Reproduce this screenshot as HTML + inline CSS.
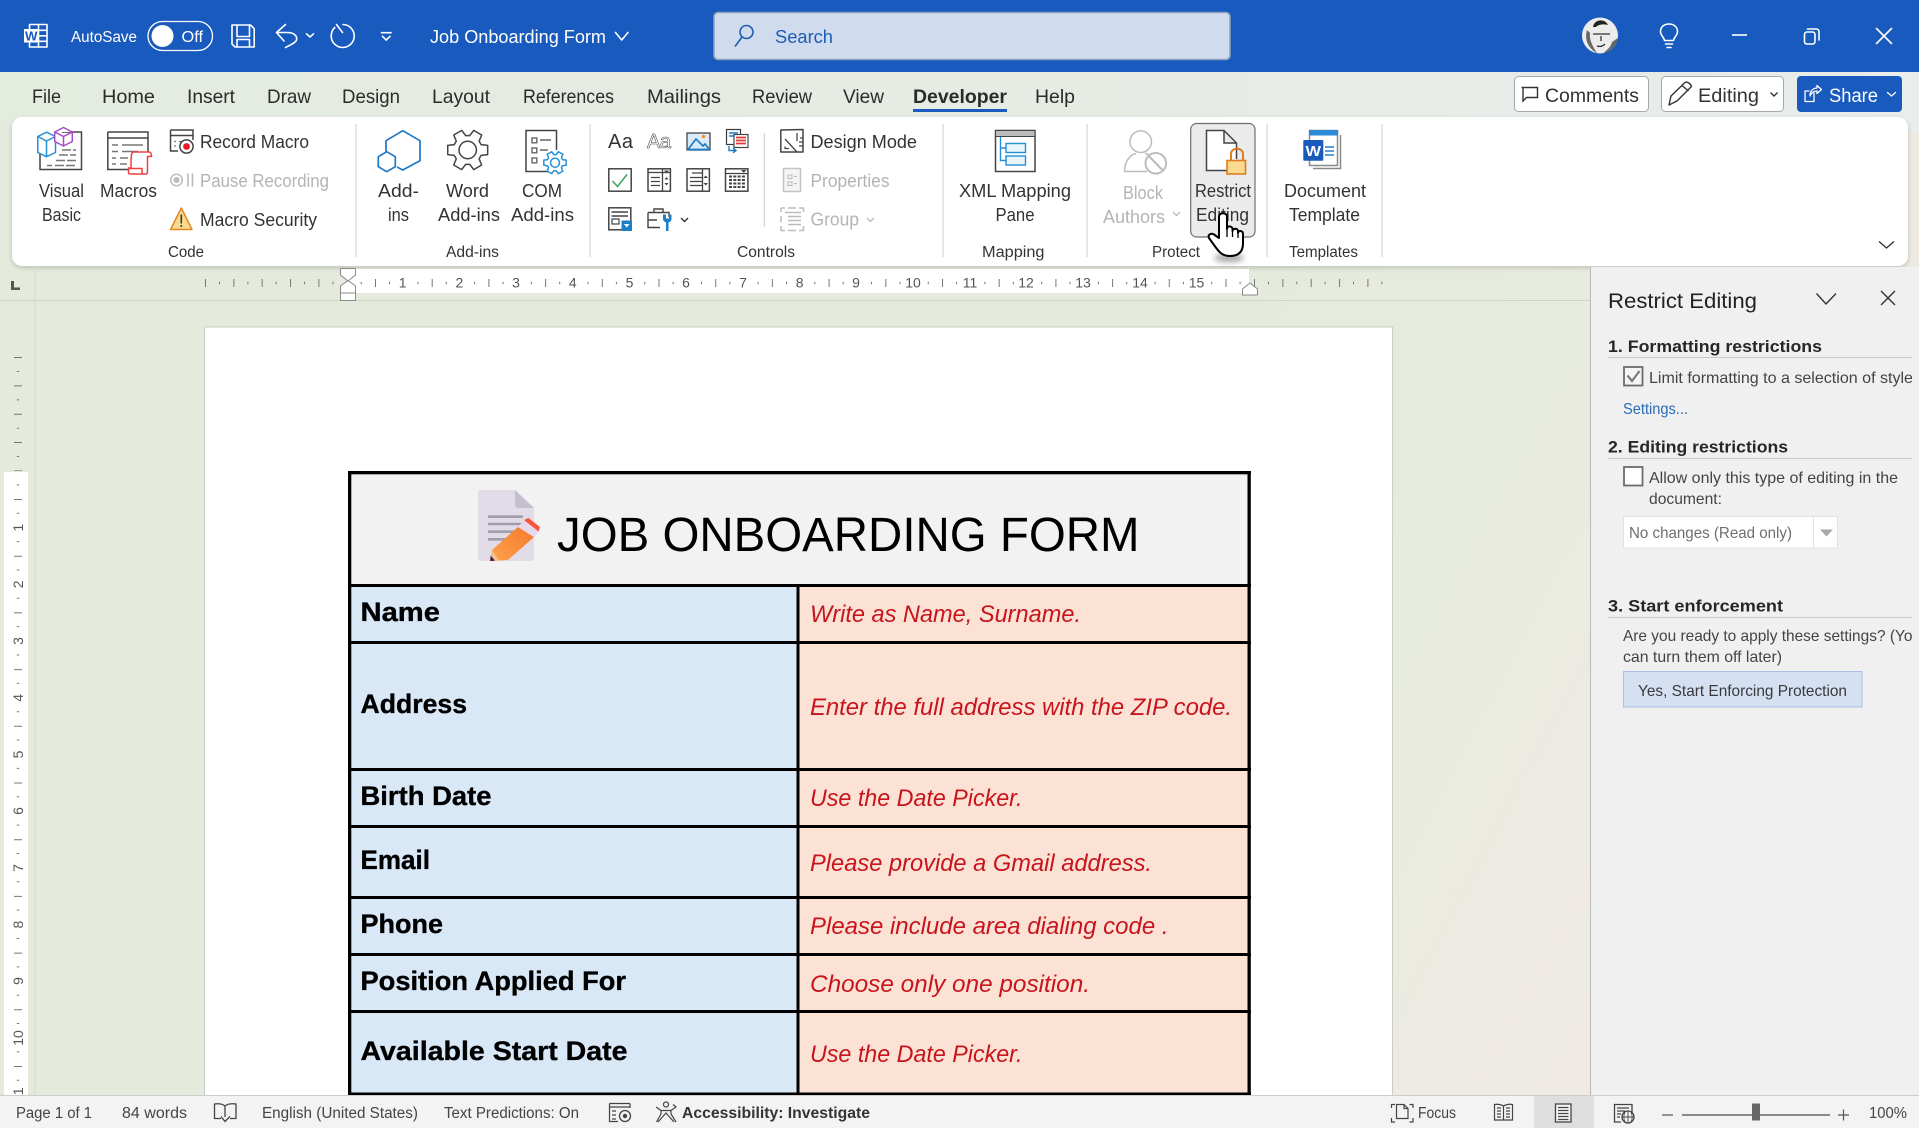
<!DOCTYPE html>
<html lang="en"><head><meta charset="utf-8"><title>Job Onboarding Form - Word</title>
<style>
html,body{margin:0;padding:0;width:1919px;height:1128px;overflow:hidden;background:#e4ebdd}
svg{display:block}
text{font-family:"Liberation Sans",sans-serif;fill:#333;white-space:pre}
.w{fill:#fff}
.tab{font-size:19.5px;fill:#2b2b2b}
.lg{font-size:18.5px;fill:#333}
.gr{font-size:15.5px;fill:#333}
.dis{fill:#b4b4b4}
.pt{font-size:17px;font-weight:bold;fill:#262626}
.pb{font-size:16px;fill:#444}
.st{font-size:15.5px;fill:#444}
.rn{font-size:14px;fill:#555;text-anchor:middle}
.lab{font-size:26.5px;font-weight:bold;fill:#000;stroke:#000;stroke-width:.35px}
.val{font-size:24px;font-style:italic;fill:#c8141c}
.ln{fill:none;stroke:#444;stroke-width:1.5}
.g{fill:none;stroke:#8a8a8a;stroke-width:1.5}
.d{fill:none;stroke:#bcbcbc;stroke-width:1.5}
.wl{fill:none;stroke:#fff;stroke-width:1.6;stroke-linecap:round;stroke-linejoin:round}
</style></head><body>
<svg xmlns="http://www.w3.org/2000/svg" width="1919" height="1128" viewBox="0 0 1919 1128">
<defs>
<linearGradient id="bg" gradientUnits="userSpaceOnUse" x1="0" y1="260" x2="1600" y2="1100"><stop offset="0" stop-color="#e4ebdd"/><stop offset=".6" stop-color="#e4ebdc"/><stop offset=".82" stop-color="#e9ebe0"/><stop offset="1" stop-color="#f0eae5"/></linearGradient>
<linearGradient id="tb" x1="0" y1="0" x2="1" y2="0"><stop offset="0" stop-color="#e4ebdf"/><stop offset=".55" stop-color="#e6ebe4"/><stop offset="1" stop-color="#e9edeb"/></linearGradient>
<linearGradient id="pen" x1="0" y1="1" x2="1" y2="0"><stop offset="0" stop-color="#ffa14f"/><stop offset="1" stop-color="#f57a2a"/></linearGradient>
<clipPath id="pc"><rect x="1600" y="280" width="312" height="440"/></clipPath>
<clipPath id="vc"><rect x="0" y="300" width="34" height="795"/></clipPath>
<polygon id="gear" points="19.97,-4.61 19.97,4.61 13.44,5.43 11.43,8.93 13.98,14.99 5.99,19.6 2.02,14.36 -2.02,14.36 -5.99,19.6 -13.98,14.99 -11.43,8.93 -13.44,5.43 -19.97,4.61 -19.97,-4.61 -13.44,-5.43 -11.43,-8.93 -13.98,-14.99 -5.99,-19.6 -2.02,-14.36 2.02,-14.36 5.99,-19.6 13.98,-14.99 11.43,-8.93 13.44,-5.43"/>
<filter id="bl" x="-50%" y="-100%" width="200%" height="300%"><feGaussianBlur stdDeviation="3"/></filter>
<filter id="sh" x="-2%" y="-10%" width="104%" height="125%"><feGaussianBlur stdDeviation="2.5"/></filter>
</defs>

<!-- backgrounds -->
<rect width="1919" height="1128" fill="url(#bg)"/>
<rect y="72" width="1919" height="60" fill="url(#tb)"/>
<rect width="1919" height="72" fill="#185abd"/>

<!-- title bar -->
<g class="wl"><rect x="29.5" y="24.5" width="17.5" height="22.5" fill="none"/><path d="M38.5 24.5V47M38 30.3H47M38 35.8H47M38 41.3H47"/></g>
<rect x="24" y="29" width="14.5" height="13.5" fill="#fff"/>
<text x="25" y="40.5" font-size="12.5" font-weight="bold" style="fill:#185abd" textLength="12.5" lengthAdjust="spacingAndGlyphs">W</text>
<text class="w" x="71" y="42" font-size="15.5" textLength="66" lengthAdjust="spacingAndGlyphs">AutoSave</text>
<rect x="148" y="21.5" width="64.5" height="29" rx="14.5" fill="none" stroke="#fff" stroke-width="1.3"/>
<circle cx="162.5" cy="36" r="11" fill="#fff"/>
<text class="w" x="181.5" y="42" font-size="15.5" textLength="21.5" lengthAdjust="spacingAndGlyphs">Off</text>
<path class="wl" d="M232 25H250.5L254.2 28.7V47H235L232 44ZM237 25V36.5H249.5V25M237 47V39.5H249.5V47"/>
<path class="wl" d="M285.5 24.5L276.5 32.5L284 41M276.5 32.5H287.5C294 32.5 297.5 36 296.5 40C295.5 43 290 45 285.5 47.5"/>
<path class="wl" d="M306.5 33.8L310 37L313.5 33.8"/>
<path class="wl" d="M336.5 24.5L342.5 32.5M343 24.5C349.5 24.5 354.2 30 354.2 36C354.2 42.3 349 47.5 342.7 47.5C336.4 47.5 331.2 42.3 331.2 36C331.2 32.5 332.6 29.5 334.8 27.5"/>
<path class="wl" d="M381.5 32.7H391M382.5 36.3L386.2 40L390 36.3"/>
<text class="w" x="430" y="43" font-size="18" textLength="176" lengthAdjust="spacingAndGlyphs">Job Onboarding Form</text>
<path class="wl" d="M615.5 32.5L621.7 40L628 32.5"/>
<rect x="714" y="12.5" width="516" height="47" rx="4" fill="#d0dcee" stroke="#8fa2bd" stroke-width="1.5"/>
<circle cx="746.5" cy="32" r="6.5" fill="none" stroke="#1f5cb0" stroke-width="1.6"/><path d="M742 37L735 46.5" stroke="#1f5cb0" stroke-width="1.6" fill="none"/>
<text x="775" y="43" font-size="18.5" style="fill:#1d5cb3" textLength="58" lengthAdjust="spacingAndGlyphs">Search</text>
<g transform="translate(-1 0)">
<circle cx="1601" cy="35.5" r="18" fill="#ececec"/>
<path d="M1594 27C1595 19 1606 18 1609 25C1605 24 1600 24 1597 27Z" fill="#222"/>
<path d="M1588 30C1585 40 1590 49 1598 53C1594 47 1590 40 1591 33ZM1604 53.5C1612 52 1618 45 1619 38L1613 42C1612 47 1608 50 1604 53.5Z" fill="#666"/>
<path d="M1594 34H1600M1604 34H1611M1600 34H1604M1598 46C1601 47 1604 46 1606 44M1602 36V41" stroke="#333" stroke-width="1.3" fill="none"/>
<path class="wl" d="M1666.5 40.5C1666 37 1662.5 35.5 1662.5 31.5C1662.5 27 1666 24 1671 24C1676 24 1679.5 27 1679.5 31.5C1679.5 35.5 1676 37 1675.5 40.5ZM1667.5 44H1674.5M1669 47.5H1673" transform="translate(-1 0)"/>
<path d="M1733 35H1748" stroke="#fff" stroke-width="1.6"/>
<rect x="1805.5" y="32" width="10.5" height="12" rx="2.5" class="wl"/>
<path class="wl" d="M1808.5 29H1817C1819 29 1820 30 1820 32V40"/>
<path class="wl" d="M1877.5 28.5L1892.5 43.5M1892.5 28.5L1877.5 43.5"/>
</g>

<!-- tabs -->
<text class="tab" x="32" y="103" textLength="29" lengthAdjust="spacingAndGlyphs">File</text>
<text class="tab" x="102" y="103" textLength="53" lengthAdjust="spacingAndGlyphs">Home</text>
<text class="tab" x="187" y="103" textLength="48" lengthAdjust="spacingAndGlyphs">Insert</text>
<text class="tab" x="267" y="103" textLength="44" lengthAdjust="spacingAndGlyphs">Draw</text>
<text class="tab" x="342" y="103" textLength="58" lengthAdjust="spacingAndGlyphs">Design</text>
<text class="tab" x="432" y="103" textLength="58" lengthAdjust="spacingAndGlyphs">Layout</text>
<text class="tab" x="523" y="103" textLength="91" lengthAdjust="spacingAndGlyphs">References</text>
<text class="tab" x="647" y="103" textLength="74" lengthAdjust="spacingAndGlyphs">Mailings</text>
<text class="tab" x="752" y="103" textLength="60" lengthAdjust="spacingAndGlyphs">Review</text>
<text class="tab" x="843" y="103" textLength="41" lengthAdjust="spacingAndGlyphs">View</text>
<text class="tab" x="913" y="103" font-weight="bold" textLength="94" lengthAdjust="spacingAndGlyphs">Developer</text>
<rect x="913" y="109" width="94" height="3" fill="#185abd"/>
<text class="tab" x="1035" y="103" textLength="40" lengthAdjust="spacingAndGlyphs">Help</text>

<g transform="translate(-1 0)">
<rect x="1515.5" y="76.5" width="134" height="35" rx="4" fill="#fff" stroke="#a8a8a8"/>
<path d="M1522.5 87.5H1538.5V97.5H1527.5L1524 101V87.5" fill="none" stroke="#333" stroke-width="1.4"/>
<text x="1546" y="102" font-size="19" textLength="94" lengthAdjust="spacingAndGlyphs">Comments</text>
<rect x="1662.5" y="76.5" width="122" height="35" rx="4" fill="#fff" stroke="#a8a8a8"/>
<path d="M1670 105L1672 96L1686 82.5C1688 81 1692 84 1692.5 86.5L1678 101ZM1683 85.5L1689.5 91" fill="none" stroke="#333" stroke-width="1.4" stroke-linejoin="round"/>
<text x="1699" y="102" font-size="19" textLength="61" lengthAdjust="spacingAndGlyphs">Editing</text>
<path d="M1771.5 92.5L1775 96L1778.5 92.5" fill="none" stroke="#333" stroke-width="1.4"/>
<rect x="1798" y="76" width="105" height="36" rx="4" fill="#185abd"/>
<path class="wl" d="M1815 93V101.5H1806V91H1810M1811 96C1811 90 1815 88 1818 88V85.5L1822.5 89.5L1818 93.5V91C1815 91 1812.5 92.5 1811 96Z" style="stroke-width:1.3"/>
<text class="w" x="1830" y="102" font-size="19" textLength="49" lengthAdjust="spacingAndGlyphs">Share</text>
<path class="wl" d="M1888.5 92.5L1892.5 96L1896.5 92.5" style="stroke-width:1.3"/>
</g>

<!-- ribbon -->
<rect x="12" y="119" width="1896" height="149" rx="10" fill="#8b9484" opacity=".45" filter="url(#sh)"/>
<rect x="12" y="117" width="1896" height="149" rx="10" fill="#fff"/>
<g stroke="#d6d6d6" stroke-width="1.2"><path d="M356 124V257M590 124V257M943 124V257M1087 124V257M1267 124V257M1382 124V257"/></g>

<!-- visual basic icon -->
<path class="ln" d="M62 132H81.5V169.5H40V148"/>
<path d="M47 165.5H52M55 165.5H76M56 160.5H76M59 155H76M62 150H76" stroke="#777" stroke-width="1.4" stroke-dasharray="9 2" fill="none"/>
<path d="M46.5 132.2L55.5 136.5V152.5L46.5 156.7L37.8 152.5V136.5ZM37.8 136.5L46.5 141L55.5 136.5M46.5 141V156.7" fill="#fff" stroke="#2390d8" stroke-width="1.5" stroke-linejoin="round"/>
<path d="M63.5 127.5L72.3 132V141.5L63.5 146L54.7 141.5V132ZM54.7 132L63.5 136.5L72.3 132M63.5 136.5V146" fill="#fff" stroke="#a64cc5" stroke-width="1.5" stroke-linejoin="round"/>
<text class="lg" x="39" y="197" textLength="45" lengthAdjust="spacingAndGlyphs">Visual</text>
<text class="lg" x="42" y="221" textLength="39" lengthAdjust="spacingAndGlyphs">Basic</text>
<!-- macros icon -->
<path class="ln" d="M107.8 132H148V152M107.8 132V169.5H129M107.8 138H148"/>
<path d="M112 145H118M122 145H143M112 151.5H118M122 151.5H138M112 158H116M120 158H128M112 164H116M120 164H127" stroke="#777" stroke-width="1.4" fill="none"/>
<path d="M133 152H149C151 152 151.5 153.5 151.5 156.5H147.5V171M133 152C131.5 153 131 154 131 168H128.5V172.5C128.5 174 130 174 132 174H146.5C147 174 147.5 173 147.5 171M128.5 168.5H142V174" fill="#fff" stroke="#ef4040" stroke-width="1.5"/>
<text class="lg" x="100" y="197" textLength="57" lengthAdjust="spacingAndGlyphs">Macros</text>
<!-- record -->
<path class="ln" d="M170.5 130H193V140M170.5 130V151H178M170.5 135.5H193"/>
<path d="M174 141.5H176M174 146H176M179 141.5H182" stroke="#777" stroke-width="1.3"/>
<circle cx="186.5" cy="146.5" r="6.6" fill="#fff" stroke="#444" stroke-width="1.5"/><circle cx="186.5" cy="146.5" r="3.4" fill="#e81b23"/>
<text class="lg" x="200" y="148" textLength="109" lengthAdjust="spacingAndGlyphs">Record Macro</text>
<circle cx="176.5" cy="180" r="5.8" fill="none" stroke="#bcbcbc" stroke-width="1.5"/><circle cx="176.5" cy="180" r="3" fill="#bcbcbc"/>
<path d="M188 173.5V186.5M192.5 173.5V186.5" stroke="#bcbcbc" stroke-width="1.7"/>
<text class="lg dis" x="200" y="187" textLength="129" lengthAdjust="spacingAndGlyphs">Pause Recording</text>
<path d="M181.3 208L192 229.5H170.5Z" fill="#fbd98e" stroke="#e28723" stroke-width="1.5" stroke-linejoin="round"/><path d="M181.3 214.5V223.5M181.3 225V227" stroke="#333" stroke-width="1.5"/>
<text class="lg" x="200" y="226" textLength="117" lengthAdjust="spacingAndGlyphs">Macro Security</text>
<text class="gr" x="168" y="257" textLength="36" lengthAdjust="spacingAndGlyphs">Code</text>

<!-- add-ins -->
<path d="M386 152V140.7L402.7 130.7L420 140.7V160.7L402.7 170L397 167" fill="none" stroke="#1d78c8" stroke-width="1.7" stroke-linejoin="round"/>
<path d="M386.7 151.7L395.3 156.7V166.7L386.7 171.7L378.3 166.7V156.7Z" fill="none" stroke="#1d78c8" stroke-width="1.7" stroke-linejoin="round"/>
<text class="lg" x="378" y="197" textLength="41" lengthAdjust="spacingAndGlyphs">Add-</text>
<text class="lg" x="388" y="221" textLength="21" lengthAdjust="spacingAndGlyphs">ins</text>
<use href="#gear" transform="translate(467.7 150)" fill="#fff" stroke="#444" stroke-width="1.5" stroke-linejoin="round"/>
<circle cx="467.7" cy="150" r="8.7" fill="none" stroke="#444" stroke-width="1.5"/>
<text class="lg" x="446" y="197" textLength="43" lengthAdjust="spacingAndGlyphs">Word</text>
<text class="lg" x="438" y="221" textLength="62" lengthAdjust="spacingAndGlyphs">Add-ins</text>
<path class="ln" d="M548 171.5H526V130.5H556.5V150"/>
<path d="M540 140H551M540 150H548" stroke="#666" stroke-width="1.4"/>
<g fill="none" stroke="#666" stroke-width="1.4"><rect x="532" y="138" width="4.8" height="4.8"/><rect x="532" y="148" width="4.8" height="4.8"/><rect x="532" y="158" width="4.8" height="4.8"/></g>
<use href="#gear" transform="translate(555 162.7) scale(.56)" fill="#fff" stroke="#2390d8" stroke-width="2.6" stroke-linejoin="round"/>
<circle cx="555" cy="162.7" r="4.5" fill="none" stroke="#2390d8" stroke-width="1.5"/>
<text class="lg" x="522" y="197" textLength="40" lengthAdjust="spacingAndGlyphs">COM</text>
<text class="lg" x="511" y="221" textLength="63" lengthAdjust="spacingAndGlyphs">Add-ins</text>
<text class="gr" x="446" y="257" textLength="53" lengthAdjust="spacingAndGlyphs">Add-ins</text>

<!-- controls -->
<text x="608" y="148" font-size="20" style="fill:#333" textLength="25" lengthAdjust="spacing">Aa</text>
<text x="647" y="148" font-size="20" style="fill:#fff;stroke:#444;stroke-width:.55" textLength="24" lengthAdjust="spacing">Aa</text>
<rect x="687" y="133" width="23" height="17" fill="#d9ebf9" stroke="#444" stroke-width="1.3"/>
<path d="M688 149.5L696 139L703 146L705 144L709.5 149.5Z" fill="#d9ebf9" stroke="#1d7cc6" stroke-width="1.7"/><circle cx="703.5" cy="136.5" r="1.6" fill="#f08a24"/>
<rect x="726.5" y="129.5" width="14" height="15" fill="#fff" stroke="#3a3a3a" stroke-width="1.2"/><path d="M729 133H738M729 136H735" stroke="#1d7cc6" stroke-width="1.5"/>
<rect x="734" y="134.5" width="14" height="13" fill="#fff" stroke="#444" stroke-width="1.2"/><path d="M736 137.5H746M736 140.5H746M736 143.5H746" stroke="#e53a3a" stroke-width="1.7"/>
<path d="M729 146V150.5H735M733 148.2L736 150.5L733 152.8" fill="none" stroke="#1d7cc6" stroke-width="1.4"/>
<rect x="608.8" y="168.8" width="22.4" height="22.4" fill="#fff" stroke="#444" stroke-width="1.5"/><path d="M612.5 181L617.5 186.5L627 174.5" fill="none" stroke="#3ca35a" stroke-width="1.5"/>
<g class="ln"><rect x="648" y="168.8" width="22.4" height="22.4"/><rect x="687" y="168.8" width="22.4" height="22.4"/><rect x="725.5" y="168.8" width="22.4" height="22.4"/></g>
<path d="M648 172.5H670M662.5 169V191M651 177.5H660M651 181.5H660M651 185.5H660M692 173H702M690 177.5H702M690 181.5H702M690 185.5H702M702.5 169V191" stroke="#444" stroke-width="1.3" fill="none"/>
<path d="M664 170.5H669L666.5 173ZM664.5 179.5H668.5L666.5 177ZM664.5 183H668.5L666.5 185.5ZM703.5 178H708L705.7 175.5ZM703.5 183H708L705.7 185.5ZM741 170H746.5L743.7 172.8Z" fill="#444"/>
<path d="M725.5 173.5H748" stroke="#444" stroke-width="1.3"/>
<path d="M729 176.5H745M729 180H745M729 183.5H745M729 187H745" stroke="#444" stroke-width="2" stroke-dasharray="3 1.3" fill="none"/>
<rect x="608.8" y="207.8" width="22" height="22" fill="#fff" stroke="#444" stroke-width="1.5"/><path d="M611.5 212H628M611.5 216H628" stroke="#444" stroke-width="1.4" /><rect x="612" y="219" width="7" height="5" fill="none" stroke="#444" stroke-width="1.2"/>
<rect x="621.5" y="220.5" width="10.5" height="10.5" fill="#1d7fc8"/><path d="M624 224H629.5L626.7 227.5Z" fill="#fff"/>
<path d="M648 212.5H669V217M648 212.5V227.5H660M654 212.5V209H663V212.5M648 220H657" fill="none" stroke="#444" stroke-width="1.4"/>
<path d="M663 214.5V219.5C664 222 666 222 666 223V231H668.5V223C668.5 222 671 222 671.5 219.5V214.5L669 214.5V218.5H666V214.5Z" fill="#1d7fc8"/>
<path d="M681 218L684.5 221.5L688 218" fill="none" stroke="#333" stroke-width="1.4"/>
<path d="M764.3 133V227" stroke="#d4d4d4" stroke-width="1.2"/>
<path d="M780.8 130V152H803V129.5Z" fill="#fff" stroke="#444" stroke-width="1.5" stroke-linejoin="round"/><path d="M785 139L797 152M785 146.5V148.5H789M797 133V141M800 138H803M799 142H803M799 146H803" fill="none" stroke="#444" stroke-width="1.3"/>
<text class="lg" x="810.5" y="148" textLength="106.5" lengthAdjust="spacingAndGlyphs">Design Mode</text>
<rect x="783.5" y="168.5" width="17" height="23" fill="#f4f4f4" stroke="#c4c4c4" stroke-width="1.5"/><rect x="788" y="175" width="4" height="3.5" fill="none" stroke="#bcbcbc"/><rect x="788" y="182" width="4" height="3.5" fill="none" stroke="#bcbcbc"/><path d="M794 176.5H797M794 183.5H797" stroke="#bcbcbc"/>
<text class="lg dis" x="810.5" y="187" textLength="79" lengthAdjust="spacingAndGlyphs">Properties</text>
<path d="M781 208H785M781 212V208M799 208H803.5V212M781 226V230.5H785M799 230.5H803.5V226M781 216V222M788 208H796M788 230.5H796M785 212.5H801M788 216.5H801M788 220.5H801M788 224.5H801" fill="none" stroke="#bcbcbc" stroke-width="1.5"/>
<text class="lg dis" x="810.5" y="225.5" textLength="48.5" lengthAdjust="spacingAndGlyphs">Group</text>
<path d="M867 218L870.5 221.5L874 218" fill="none" stroke="#bcbcbc" stroke-width="1.4"/>
<text class="gr" x="737" y="257" textLength="58" lengthAdjust="spacingAndGlyphs">Controls</text>

<!-- mapping -->
<rect x="995.5" y="130.5" width="39.5" height="41" fill="#fff" stroke="#444" stroke-width="1.5"/><rect x="995.5" y="130.5" width="39.5" height="6" fill="#bdbdbd" stroke="#444" stroke-width="1"/>
<path d="M1000.5 137V160.5H1006M1000.5 148H1006" fill="none" stroke="#2390d8" stroke-width="1.4"/>
<rect x="1006" y="143.5" width="19.5" height="9" fill="#eaf4fb" stroke="#2390d8" stroke-width="1.4"/><rect x="1006" y="156" width="19.5" height="9" fill="#eaf4fb" stroke="#2390d8" stroke-width="1.4"/>
<text class="lg" x="959" y="197" textLength="112" lengthAdjust="spacingAndGlyphs">XML Mapping</text>
<text class="lg" x="995.5" y="221" textLength="39" lengthAdjust="spacingAndGlyphs">Pane</text>
<text class="gr" x="982" y="257" textLength="62.5" lengthAdjust="spacingAndGlyphs">Mapping</text>

<!-- protect -->
<circle cx="1140.7" cy="141.7" r="10.8" fill="#fff" stroke="#bcbcbc" stroke-width="1.5"/>
<path d="M1124.5 172C1124.5 161 1130 155 1136 153.5M1145 153.5C1147 154 1149 155 1150 156M1124.5 171.5H1147" fill="none" stroke="#bcbcbc" stroke-width="1.5"/>
<circle cx="1155.8" cy="163.3" r="10.3" fill="#fff" stroke="#bcbcbc" stroke-width="2"/><path d="M1148.8 156L1162.8 170.5" stroke="#bcbcbc" stroke-width="2"/>
<text class="lg dis" x="1123" y="199" textLength="40" lengthAdjust="spacingAndGlyphs">Block</text>
<text class="lg dis" x="1103" y="223" textLength="62" lengthAdjust="spacingAndGlyphs">Authors</text>
<path d="M1173 212L1176.5 215.5L1180 212" fill="none" stroke="#bcbcbc" stroke-width="1.4"/>
<rect x="1190.7" y="123.5" width="64.3" height="113.5" rx="6" fill="#ebebeb" stroke="#707070" stroke-width="1.2"/>
<path d="M1227 170.5H1206.5V130.5H1224L1236.5 143V159M1224 130.5V143H1236.5" fill="#fff" stroke="#444" stroke-width="1.5"/>
<path d="M1231 161V154C1231 147 1243 147 1243 154V161" fill="none" stroke="#dd7d1f" stroke-width="2"/>
<rect x="1227" y="160.5" width="18.5" height="13.5" fill="#fbd98e" stroke="#dd7d1f" stroke-width="1.6"/>
<text class="lg" x="1195" y="197" textLength="56" lengthAdjust="spacingAndGlyphs">Restrict</text>
<text class="lg" x="1196" y="221" textLength="53" lengthAdjust="spacingAndGlyphs">Editing</text>
<text class="gr" x="1152" y="257" textLength="48" lengthAdjust="spacingAndGlyphs">Protect</text>

<!-- template -->
<path d="M1313 168.5H1340.5V135" fill="none" stroke="#8a8a8a" stroke-width="1.5"/>
<rect x="1309.5" y="130.5" width="28" height="35" fill="#fff" stroke="#8a8a8a" stroke-width="1.5"/><rect x="1309" y="130" width="29" height="5.5" fill="#2a8ad8"/>
<path d="M1325 147H1334M1325 151H1334M1325 155H1334" stroke="#2a7ad0" stroke-width="1.5"/>
<rect x="1303.3" y="140" width="20" height="20.7" rx="1" fill="#185abd"/>
<text class="w" x="1305.5" y="156" font-size="14.5" font-weight="bold" textLength="15.5" lengthAdjust="spacingAndGlyphs">W</text>
<text class="lg" x="1284" y="197" textLength="82" lengthAdjust="spacingAndGlyphs">Document</text>
<text class="lg" x="1289" y="221" textLength="71" lengthAdjust="spacingAndGlyphs">Template</text>
<text class="gr" x="1289" y="257" textLength="69" lengthAdjust="spacingAndGlyphs">Templates</text>
<path d="M1879 241.5L1886.5 248L1894 241.5" fill="none" stroke="#333" stroke-width="1.4"/>

<!-- hand cursor -->
<ellipse cx="1229" cy="258" rx="15" ry="4" fill="#000" opacity=".35" filter="url(#bl)"/>
<path d="M1219 236V217C1219 212 1227 212 1227 217V229C1227 225.5 1232 225.5 1232.5 229V231C1233 228 1237.5 228 1238 231V233C1238.5 230 1243 230.5 1243 234V243C1243 250 1240 256 1230 256C1222 256 1219 252 1214 245L1209 238C1207.5 235 1211 232.5 1214 234.5L1219 238Z" fill="#fff" stroke="#000" stroke-width="2" stroke-linejoin="round"/>
<path d="M1227 229V237M1232.5 231V237M1238 233V238" stroke="#000" stroke-width="1.3"/>

<!-- rulers -->
<path d="M35 266V1095" stroke="#d5dbce"/>
<path d="M0 300.5H1590" stroke="#cfd3cc"/>
<path d="M11 281H14V287.5H20V290H11Z" fill="#555"/>
<rect x="347" y="269" width="902" height="24" fill="#fff"/>
<g stroke="#777" fill="none">
<path d="M205 283H347M1254 283H1383" stroke-width="8" stroke-dasharray="1 27.35"/>
<path d="M375 283H1246" stroke-width="8" stroke-dasharray="1 55.7"/>
<path d="M219 283H1383" stroke-width="2.4" stroke-dasharray="1 27.35"/>
</g>
<g class="rn" transform="translate(-1 -.5)">
<text class="rn" x="403.7" y="288">1</text><text class="rn" x="460.4" y="288">2</text><text class="rn" x="517" y="288">3</text><text class="rn" x="573.8" y="288">4</text><text class="rn" x="630.5" y="288">5</text><text class="rn" x="687" y="288">6</text><text class="rn" x="744" y="288">7</text><text class="rn" x="800.6" y="288">8</text><text class="rn" x="857" y="288">9</text><text class="rn" x="914" y="288">10</text><text class="rn" x="971" y="288">11</text><text class="rn" x="1027" y="288">12</text><text class="rn" x="1084" y="288">13</text><text class="rn" x="1141" y="288">14</text><text class="rn" x="1197.5" y="288">15</text>
</g>
<path d="M340.5 268.5H355.5V275L348 281L340.5 275ZM340.5 293V286L348 280.5L355.5 286V293ZM340.5 293H355.5V300.5H340.5Z" fill="#fff" stroke="#8a8a8a" stroke-width="1"/>
<path d="M1242.5 295V289L1250 283L1257.5 289V295Z" fill="#fff" stroke="#8a8a8a" stroke-width="1"/>
<rect x="4" y="472" width="24" height="623" fill="#fff"/>
<g stroke="#777" fill="none" clip-path="url(#vc)">
<path d="M18 357V471" stroke-width="8" stroke-dasharray="1 27.35"/>
<path d="M18 499V1095" stroke-width="8" stroke-dasharray="1 55.7"/>
<path d="M18 371V1095" stroke-width="2.4" stroke-dasharray="1 27.35"/>
</g>
<g clip-path="url(#vc)">
<text class="rn" transform="translate(23 527.7) rotate(-90)">1</text><text class="rn" transform="translate(23 584.4) rotate(-90)">2</text><text class="rn" transform="translate(23 641) rotate(-90)">3</text><text class="rn" transform="translate(23 697.8) rotate(-90)">4</text><text class="rn" transform="translate(23 754.5) rotate(-90)">5</text><text class="rn" transform="translate(23 811) rotate(-90)">6</text><text class="rn" transform="translate(23 868) rotate(-90)">7</text><text class="rn" transform="translate(23 924.6) rotate(-90)">8</text><text class="rn" transform="translate(23 981) rotate(-90)">9</text><text class="rn" transform="translate(23 1038) rotate(-90)">10</text><text class="rn" transform="translate(23 1094.7) rotate(-90)">11</text>
</g>

<!-- page -->
<rect x="204.5" y="327" width="1188" height="780" fill="#fff" stroke="#c9cdc6"/>

<!-- table -->
<g transform="translate(-1 0)">
<rect x="350" y="472" width="900" height="114" fill="#f2f2f2"/>
<rect x="350" y="585" width="449" height="510" fill="#d9e8f7"/>
<rect x="799" y="585" width="450" height="510" fill="#fbe2d5"/>
<g fill="#000">
<rect x="349" y="471" width="903" height="3.3"/>
<rect x="349" y="471" width="3.3" height="624"/>
<rect x="1248.5" y="471" width="3.3" height="624"/>
<rect x="797.5" y="585" width="3" height="510"/>
<rect x="349" y="584" width="903" height="3"/>
<rect x="349" y="641" width="903" height="3"/>
<rect x="349" y="768" width="903" height="3"/>
<rect x="349" y="825" width="903" height="3"/>
<rect x="349" y="896" width="903" height="3"/>
<rect x="349" y="953" width="903" height="3"/>
<rect x="349" y="1010" width="903" height="3"/>
<rect x="349" y="1092.5" width="903" height="3"/>
</g>
<g transform="translate(-1 0)">
<path d="M483 490H517L536 508V558C536 560 535 561 533 561H483C481 561 480 560 480 558V493C480 491 481 490 483 490Z" fill="#e2dbe8"/>
<path d="M517 490L536 508H520C518 508 517 507 517 505Z" fill="#c4bfcf"/>
<path d="M490 516.7H525M490 524H525M490 531.7H520M490 539.3H508" stroke="#a19dab" stroke-width="2.6"/>
<path d="M494 550L520 527L536 537L510 560L492 561Z" fill="url(#pen)"/>
<path d="M494 550L492 561L501 560.5Z" fill="#f2c289"/><path d="M492 561L492.8 555.5L497 560.7Z" fill="#4a1a4c"/>
<path d="M520 527L526 520L541 531L536 537Z" fill="#e6d9ee"/>
<path d="M526 520L530.5 518L542 527L540.5 531.5Z" fill="#f9553b"/>
</g>
</g>
<text x="557" y="551" font-size="48.5" style="fill:#000" textLength="582.5" lengthAdjust="spacingAndGlyphs">JOB ONBOARDING FORM</text>

<text class="lab" x="360.5" y="621" textLength="79.5" lengthAdjust="spacingAndGlyphs">Name</text>
<text class="lab" x="360.5" y="713" textLength="106.5" lengthAdjust="spacingAndGlyphs">Address</text>
<text class="lab" x="360.5" y="805" textLength="131" lengthAdjust="spacingAndGlyphs">Birth Date</text>
<text class="lab" x="360.5" y="869" textLength="69.5" lengthAdjust="spacingAndGlyphs">Email</text>
<text class="lab" x="360.5" y="933" textLength="82.5" lengthAdjust="spacingAndGlyphs">Phone</text>
<text class="lab" x="360.5" y="990" textLength="265.5" lengthAdjust="spacingAndGlyphs">Position Applied For</text>
<text class="lab" x="360.5" y="1060" textLength="267" lengthAdjust="spacingAndGlyphs">Available Start Date</text>
<text class="val" x="810" y="622" textLength="271" lengthAdjust="spacingAndGlyphs">Write as Name, Surname.</text>
<text class="val" x="810" y="715" textLength="422" lengthAdjust="spacingAndGlyphs">Enter the full address with the ZIP code.</text>
<text class="val" x="810" y="806" textLength="212.5" lengthAdjust="spacingAndGlyphs">Use the Date Picker.</text>
<text class="val" x="810" y="871" textLength="342" lengthAdjust="spacingAndGlyphs">Please provide a Gmail address.</text>
<text class="val" x="810" y="934" textLength="358.5" lengthAdjust="spacingAndGlyphs">Please include area dialing code .</text>
<text class="val" x="810" y="992" textLength="280" lengthAdjust="spacingAndGlyphs">Choose only one position.</text>
<text class="val" x="810" y="1062" textLength="212.5" lengthAdjust="spacingAndGlyphs">Use the Date Picker.</text>

<!-- task pane -->
<rect x="1590" y="267" width="329" height="828" fill="#f0f0f0"/>
<path d="M1590.5 267V1095" stroke="#b9b9b9"/>
<text x="1608" y="308" font-size="21.5" style="fill:#222" textLength="149" lengthAdjust="spacingAndGlyphs">Restrict Editing</text>
<path d="M1816.5 293.5L1826 304L1836 293.5" fill="none" stroke="#333" stroke-width="1.4"/>
<path d="M1881 291L1895 305M1895 291L1881 305" fill="none" stroke="#333" stroke-width="1.4"/>
<text class="pt" x="1608" y="352" textLength="214" lengthAdjust="spacingAndGlyphs">1. Formatting restrictions</text>
<path d="M1608 357.5H1912M1608 458.5H1912M1608 617.5H1912" stroke="#c9c9c9"/>
<rect x="1624" y="367" width="18.5" height="18.5" fill="#f4f4f4" stroke="#6b6b6b" stroke-width="1.8"/>
<path d="M1627.5 375.5L1632 381L1639.5 371" fill="none" stroke="#7a7a7a" stroke-width="2.2"/>
<g clip-path="url(#pc)">
<text class="pb" x="1649" y="383" textLength="272" lengthAdjust="spacingAndGlyphs">Limit formatting to a selection of styles</text>
<text class="pb" x="1623" y="641" textLength="298" lengthAdjust="spacingAndGlyphs">Are you ready to apply these settings? (You</text>
</g>
<text class="pb" x="1623" y="414" style="fill:#2a6bb5" textLength="65" lengthAdjust="spacingAndGlyphs">Settings...</text>
<text class="pt" x="1608" y="452.5" textLength="180" lengthAdjust="spacingAndGlyphs">2. Editing restrictions</text>
<rect x="1624" y="467" width="18.5" height="18.5" fill="#fff" stroke="#6b6b6b" stroke-width="1.8"/>
<text class="pb" x="1649" y="483" textLength="249" lengthAdjust="spacingAndGlyphs">Allow only this type of editing in the</text>
<text class="pb" x="1649" y="504" textLength="73" lengthAdjust="spacingAndGlyphs">document:</text>
<rect x="1623.5" y="516.5" width="214" height="31.5" fill="#fff" stroke="#e2e2e2"/>
<path d="M1813.5 516.5V548" stroke="#e2e2e2"/>
<text class="pb" x="1629" y="538" style="fill:#6e6e6e" textLength="163" lengthAdjust="spacingAndGlyphs">No changes (Read only)</text>
<path d="M1820 529.5H1833L1826.5 536.5Z" fill="#a9a9a9"/>
<text class="pt" x="1608" y="611.5" textLength="175" lengthAdjust="spacingAndGlyphs">3. Start enforcement</text>
<text class="pb" x="1623" y="662" textLength="159" lengthAdjust="spacingAndGlyphs">can turn them off later)</text>
<rect x="1623.5" y="671.5" width="238.5" height="35.5" fill="#d5e1f2" stroke="#a9c0e3"/>
<text class="pb" x="1638" y="696" style="fill:#3a3a3a" textLength="209" lengthAdjust="spacingAndGlyphs">Yes, Start Enforcing Protection</text>

<!-- status bar -->
<rect y="1095" width="1919" height="33" fill="#f3f3f3"/>
<path d="M0 1095.5H1919" stroke="#cdcdcd"/>
<text class="st" x="16" y="1118" textLength="76" lengthAdjust="spacingAndGlyphs">Page 1 of 1</text>
<text class="st" x="122" y="1118" textLength="65" lengthAdjust="spacingAndGlyphs">84 words</text>
<path d="M226 1106C223 1103.5 219 1103.5 215.5 1104V1118.5H222M226 1106C229 1103.5 233 1103.5 237 1104V1118.5H231M226 1106V1117M222 1116.5L226 1121.5L231 1116.5" fill="none" stroke="#444" stroke-width="1.3" transform="translate(-1 0)"/>
<text class="st" x="262" y="1118" textLength="156" lengthAdjust="spacingAndGlyphs">English (United States)</text>
<text class="st" x="444" y="1118" textLength="135" lengthAdjust="spacingAndGlyphs">Text Predictions: On</text>
<path d="M609.5 1103.5H630M609.5 1107H630M609.5 1103.5V1121.5H618M630 1103.5V1108M612 1111H616M612 1115H616M612 1119H616" fill="none" stroke="#444" stroke-width="1.2"/><circle cx="625" cy="1116" r="5.5" fill="#f3f3f3" stroke="#444" stroke-width="1.3"/><circle cx="625" cy="1116" r="2.2" fill="#444"/>
<circle cx="666" cy="1104.5" r="2.5" fill="none" stroke="#444" stroke-width="1.2"/><path d="M656 1107L661 1110.5H671L676 1107L673 1104.5M661 1110.5V1114L656.5 1122M671 1110.5V1114L676 1122M658 1122L666 1113L674 1122" fill="none" stroke="#444" stroke-width="1.2"/>
<text x="682" y="1118" font-size="15.5" font-weight="bold" style="fill:#333" textLength="188" lengthAdjust="spacingAndGlyphs">Accessibility: Investigate</text>

<path d="M1391.5 1108V1104.5H1395M1409.5 1104.5H1413V1108M1391.5 1118V1122H1395M1413 1118V1122H1409.5" fill="none" stroke="#444" stroke-width="1.2"/>
<path d="M1396.5 1118.5V1104.5H1404L1408 1108.5V1118.5ZM1404 1104.5V1108.5H1408" fill="none" stroke="#444" stroke-width="1.2"/>
<text class="st" x="1418" y="1118" textLength="38" lengthAdjust="spacingAndGlyphs">Focus</text>
<path d="M1503.5 1106C1500 1104 1497 1104 1494.5 1104.5V1120H1503.5ZM1503.5 1106C1507 1104 1510 1104 1512.5 1104.5V1120H1503.5ZM1497 1108H1501M1497 1111H1501M1497 1114H1501M1497 1117H1501M1506 1108H1510M1506 1111H1510M1506 1114H1510M1506 1117H1510" fill="none" stroke="#444" stroke-width="1.2"/>
<rect x="1534" y="1096" width="60" height="32" fill="#dedede"/>
<rect x="1555.5" y="1104" width="15.5" height="18" fill="#f5f5f5" stroke="#444" stroke-width="1.3"/>
<path d="M1558 1107.5H1568.5M1558 1110.5H1568.5M1558 1113.5H1568.5M1558 1116.5H1568.5M1558 1119.5H1568.5" stroke="#444" stroke-width="1.2"/>
<path d="M1621 1122H1614.5V1104.5H1632V1112" fill="none" stroke="#444" stroke-width="1.3"/><path d="M1617 1108H1629M1617 1111H1625M1617 1114H1621M1617 1117H1620" stroke="#444" stroke-width="1.2"/>
<circle cx="1628" cy="1117" r="6" fill="#f3f3f3" stroke="#444" stroke-width="1.3"/><path d="M1622 1117H1634M1628 1111V1123M1625 1112C1623.5 1115 1623.5 1119 1625 1122M1631 1112C1632.5 1115 1632.5 1119 1631 1122" fill="none" stroke="#444" stroke-width=".9"/>
<path d="M1662 1115H1673" stroke="#555" stroke-width="1.2"/>
<path d="M1682 1115H1830" stroke="#666" stroke-width="1.6"/>
<rect x="1752" y="1103.5" width="8" height="17" fill="#666"/>
<path d="M1838 1115H1849M1843.5 1109.5V1120.5" stroke="#555" stroke-width="1.2"/>
<text class="st" x="1869" y="1118" textLength="38" lengthAdjust="spacingAndGlyphs">100%</text>
</svg>
</body></html>
